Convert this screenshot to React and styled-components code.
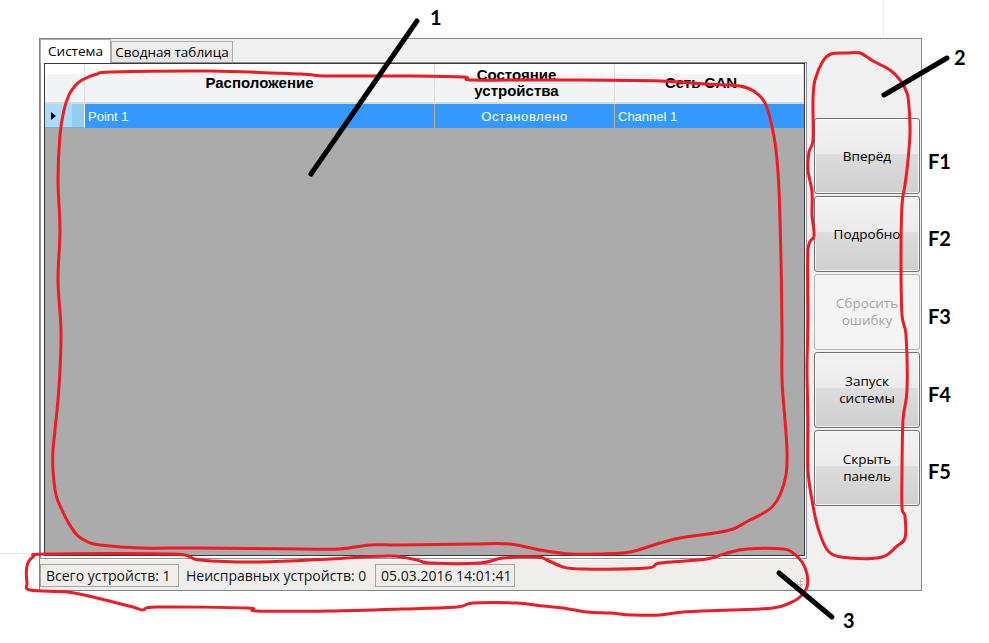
import React from "react";
import styled, { createGlobalStyle } from "styled-components";

const GlobalStyle = createGlobalStyle`
  html, body { margin: 0; padding: 0; background: #ffffff; }
  body { font-family: "Liberation Sans", Arial, sans-serif; }
`;

const UI_FONT = `"Liberation Sans", Arial, sans-serif`;
const SEGOE_FONT = `"Open Sans", "Liberation Sans", sans-serif`;
const NOTE_FONT = `Lato, "Open Sans", sans-serif`;

const Page = styled.div`
  position: relative;
  width: 989px;
  height: 643px;
  overflow: hidden;
  background: #ffffff;
`;

const Stage = styled.div`
  display: flex;
  align-items: flex-start;
  padding: 38px 0 0 39px;
`;

const Window = styled.div`
  box-sizing: border-box;
  width: 883px;
  height: 553px;
  border: 1px solid #7b8793;
  background: #f0f0f0;
  display: flex;
`;

const LeftColumn = styled.div`
  width: 767px;
  display: flex;
  flex-direction: column;
`;

const Tabs = styled.div`
  flex: 1;
  display: flex;
  flex-direction: column;
  min-height: 0;
`;

const TabStrip = styled.div`
  height: 23px;
  display: flex;
  align-items: flex-end;
`;

const Tab = styled.div`
  box-sizing: border-box;
  width: ${(p) => p.$w}px;
  height: ${(p) => (p.$active ? 24 : 21)}px;
  margin-bottom: ${(p) => (p.$active ? -1 : 0)}px;
  position: relative;
  z-index: ${(p) => (p.$active ? 1 : 0)};
  border: 1px solid #acacac;
  border-bottom: none;
  background: ${(p) => (p.$active ? "#ffffff" : "linear-gradient(#f2f2f2, #e3e3e3)")};
  font: 13.5px ${SEGOE_FONT};
  color: #000;
  display: flex;
  align-items: center;
  justify-content: center;
  padding-bottom: ${(p) => (p.$active ? 2 : 0)}px;
  white-space: nowrap;
`;

const TabPage = styled.div`
  flex: 1;
  box-sizing: border-box;
  border: 1px solid #8e9199;
  background: #ffffff;
  padding: 0 1px 2px 3px;
  display: flex;
  min-height: 0;
`;

const Grid = styled.div`
  flex: 1;
  border: 1px solid #3a3a3a;
  background: #ababab;
  display: flex;
  flex-direction: column;
`;

const COLS = "40px 350px 180px 1fr";

const HeaderRow = styled.div`
  display: grid;
  grid-template-columns: ${COLS};
  height: 40px;
  box-sizing: border-box;
  background: linear-gradient(#ffffff 0, #ffffff 27%, #f3f4f6 27%, #f1f2f4 100%);
  border-bottom: 2px solid #d9d9d9;
`;

const HeaderCell = styled.div`
  box-sizing: border-box;
  border-right: 1px solid #dcdcdc;
  display: flex;
  align-items: center;
  justify-content: center;
  text-align: center;
  padding-right: ${(p) => p.$shift || 0}px;
  font: bold 15px/16px ${UI_FONT};
  color: #000;
  overflow: hidden;
`;

const DataRow = styled.div`
  display: grid;
  grid-template-columns: ${COLS};
  height: 24px;
  background: #3399ff;
  color: #ffffff;
  font: 13px ${UI_FONT};
`;

const RowHeader = styled.div`
  box-sizing: border-box;
  border-right: 1px solid #ffffff;
  border-bottom: 1px solid #6fb3e0;
  background: linear-gradient(90deg, #aadaf7 0, #aadaf7 70%, #92cdf2 70%, #92cdf2 100%);
  display: flex;
  align-items: center;
  padding-left: 6px;
`;

const Arrow = styled.span`
  width: 0;
  height: 0;
  border-top: 4.5px solid transparent;
  border-bottom: 4.5px solid transparent;
  border-left: 5px solid #000;
`;

const DataCell = styled.div`
  box-sizing: border-box;
  border-right: 1px solid #c2ab8c;
  display: flex;
  align-items: center;
  justify-content: ${(p) => (p.$center ? "center" : "flex-start")};
  padding-left: ${(p) => (p.$center ? 0 : 3)}px;
  letter-spacing: ${(p) => (p.$center ? 0.6 : 0)}px;
  white-space: nowrap;
  overflow: hidden;
  &:last-child { border-right: none; }
`;

const StatusBar = styled.div`
  height: 31px;
  box-sizing: border-box;
  border-top: 1px solid #ffffff;
  background: #f0eeeb;
  display: flex;
  align-items: center;
  padding-top: 1px;
`;

const StatusItem = styled.div`
  box-sizing: border-box;
  width: ${(p) => p.$w}px;
  height: 23px;
  border: 1px solid ${(p) => (p.$boxed ? "#a3a3a3" : "transparent")};
  padding-left: ${(p) => (p.$boxed ? 5 : 6)}px;
  font: 14px/21px ${SEGOE_FONT};
  color: #10131a;
  white-space: nowrap;
  overflow: hidden;
`;

const Grip = styled.div`
  margin-left: auto;
  align-self: flex-end;
  width: 10px;
  height: 10px;
  margin-bottom: 3px;
  margin-right: 4px;
  background-image: radial-gradient(circle, #bdbdbd 1px, transparent 1.3px);
  background-size: 3px 3px;
  clip-path: polygon(100% 0, 100% 100%, 0 100%);
`;

const ButtonPanel = styled.div`
  flex: 1;
  display: flex;
  flex-direction: column;
  gap: 2px;
  padding: 79px 0 0 7px;
`;

const PanelButton = styled.button`
  box-sizing: border-box;
  width: 106px;
  height: 76px;
  border: 1px solid #707070;
  border-radius: 3px;
  background: linear-gradient(#f2f2f2 0, #ebebeb 47%, #dddddd 47%, #cfcfcf 100%);
  box-shadow: inset 0 0 0 1px rgba(255, 255, 255, 0.75);
  font: 13.5px/17px ${SEGOE_FONT};
  color: #000;
  padding: 0 2px;
  text-align: center;
  &:disabled {
    border-color: #b3b7ba;
    background: #f4f4f4;
    box-shadow: none;
    color: #a6a6a6;
  }
`;

const KeyColumn = styled.div`
  margin-left: 6px;
  padding-top: 84px;
  display: flex;
  flex-direction: column;
`;

const KeyLabel = styled.div`
  height: 77.6px;
  display: flex;
  align-items: center;
  font: bold 20px/1 ${NOTE_FONT};
  color: #000;
`;

const Overlay = styled.svg`
  position: absolute;
  left: 0;
  top: 0;
  pointer-events: none;
`;

const Callout = styled.span`
  position: absolute;
  left: ${(p) => p.$x}px;
  top: ${(p) => p.$y}px;
  font: bold 20px/20px ${NOTE_FONT};
  color: #000;
`;

function smooth(points, closed = true) {
  const n = points.length;
  const get = (i) => points[(i + n) % n];
  let d = `M${points[0][0]},${points[0][1]}`;
  const last = closed ? n : n - 1;
  for (let i = 0; i < last; i++) {
    const p0 = closed ? get(i - 1) : points[Math.max(i - 1, 0)];
    const p1 = get(i);
    const p2 = get(i + 1);
    const p3 = closed ? get(i + 2) : points[Math.min(i + 2, n - 1)];
    const c1 = [p1[0] + (p2[0] - p0[0]) / 6, p1[1] + (p2[1] - p0[1]) / 6];
    const c2 = [p2[0] - (p3[0] - p1[0]) / 6, p2[1] - (p3[1] - p1[1]) / 6];
    d += ` C${c1[0].toFixed(1)},${c1[1].toFixed(1)} ${c2[0].toFixed(1)},${c2[1].toFixed(1)} ${p2[0]},${p2[1]}`;
  }
  return closed ? d + " Z" : d;
}

const gridOutline = [
  [60, 135], [64, 110], [69, 95], [75, 86], [82, 80], [97, 74], [112, 72], [210, 71], [300, 74],
  [327, 76], [400, 76], [463, 77], [473, 80], [560, 80], [660, 81], [705, 84], [740, 86],
  [755, 92], [765, 103], [771, 122], [776, 150], [779, 190], [781, 260], [782, 330], [782, 380],
  [785, 420], [787, 450], [786, 475], [780, 495], [772, 507], [760, 515], [748, 521], [733, 529],
  [715, 533], [700, 535], [680, 538], [660, 543], [630, 552], [600, 554], [570, 554], [540, 550],
  [510, 544], [473, 544], [400, 545], [370, 545], [340, 549], [300, 549], [200, 548], [140, 548],
  [100, 545], [88, 542], [77, 535], [68, 522], [62, 510], [56, 495], [53, 470], [53, 450],
  [55, 430], [58, 400], [60, 370], [61, 330], [58, 280], [60, 230], [58, 180],
];

const panelOutline = [
  [813, 140], [813, 100], [815, 80], [823, 61], [831, 54], [847, 53], [860, 53], [873, 61],
  [890, 70], [900, 80], [907, 93], [909, 107], [910, 133], [908, 160], [905, 185], [902, 205],
  [901, 260], [902, 315], [906, 335], [907, 390], [903, 420], [902, 470], [902, 508], [905, 516],
  [905, 538], [897, 546], [882, 557], [850, 558], [829, 552], [818, 528], [812, 500], [808, 470],
  [808, 420], [807, 370], [808, 320], [808, 250], [814, 236], [812, 215], [812, 192], [808, 170],
  [809, 152],
];

const statusOutline = [
  [27, 566], [33, 557], [47, 554], [173, 554], [200, 560], [260, 562], [330, 559], [363, 557],
  [393, 556], [417, 560], [430, 563], [480, 563], [503, 558], [537, 557], [547, 560], [563, 567],
  [583, 569], [647, 568], [660, 563], [707, 559], [727, 553], [747, 549], [783, 549], [793, 553],
  [802, 562], [807, 574], [807, 587], [800, 597], [790, 603], [773, 608], [730, 610], [683, 612],
  [660, 615], [633, 615], [610, 613], [587, 612], [563, 608], [543, 606], [517, 603], [473, 603],
  [457, 607], [403, 609], [330, 611], [257, 611], [247, 608], [157, 607], [143, 610], [133, 607],
  [113, 602], [93, 597], [67, 592], [30, 590], [27, 583],
];

const buttons = [
  { label: ["Вперёд"] },
  { label: ["Подробно"] },
  { label: ["Сбросить", "ошибку"], disabled: true },
  { label: ["Запуск", "системы"] },
  { label: ["Скрыть", "панель"] },
];

export default function App() {
  return (
    <>
      <GlobalStyle />
      <Page>
        <Stage>
          <Window>
            <LeftColumn>
              <Tabs>
                <TabStrip>
                  <Tab $active $w={71}>Система</Tab>
                  <Tab $w={122}>Сводная таблица</Tab>
                </TabStrip>
                <TabPage>
                  <Grid>
                    <HeaderRow>
                      <HeaderCell />
                      <HeaderCell>Расположение</HeaderCell>
                      <HeaderCell $shift={16}>
                        Состояние
                        <br />
                        устройства
                      </HeaderCell>
                      <HeaderCell $shift={16}>Сеть CAN</HeaderCell>
                    </HeaderRow>
                    <DataRow>
                      <RowHeader>
                        <Arrow />
                      </RowHeader>
                      <DataCell>Point 1</DataCell>
                      <DataCell $center>Остановлено</DataCell>
                      <DataCell>Channel 1</DataCell>
                    </DataRow>
                  </Grid>
                </TabPage>
              </Tabs>
              <StatusBar>
                <StatusItem $boxed $w={139}>Всего устройств: 1</StatusItem>
                <StatusItem $w={196}>Неисправных устройств: 0</StatusItem>
                <StatusItem $boxed $w={140}>05.03.2016 14:01:41</StatusItem>
                <Grip />
              </StatusBar>
            </LeftColumn>
            <ButtonPanel>
              {buttons.map((b, i) => (
                <PanelButton key={i} disabled={b.disabled}>
                  {b.label.map((l, j) => (
                    <React.Fragment key={j}>
                      {j > 0 && <br />}
                      {l}
                    </React.Fragment>
                  ))}
                </PanelButton>
              ))}
            </ButtonPanel>
          </Window>
          <KeyColumn>
            {["F1", "F2", "F3", "F4", "F5"].map((k) => (
              <KeyLabel key={k}>{k}</KeyLabel>
            ))}
          </KeyColumn>
        </Stage>

        <Overlay width="989" height="643" viewBox="0 0 989 643">
          <line x1="883.5" y1="0" x2="883.5" y2="37" stroke="#e6ecf2" strokeWidth="1" />
          <line x1="0" y1="553.5" x2="38" y2="553.5" stroke="#dde8f1" strokeWidth="1" />
          <g fill="none" stroke="#ed1c24" strokeWidth="3" strokeLinejoin="round" strokeLinecap="round">
            <path d={smooth(gridOutline)} />
            <path d={smooth(panelOutline)} />
            <path d={smooth(statusOutline)} />
          </g>
          <g stroke="#000" strokeWidth="5" strokeLinecap="round">
            <line x1="417" y1="21" x2="311" y2="174" />
            <line x1="947" y1="58" x2="884" y2="95" />
            <line x1="779" y1="573" x2="832" y2="617" />
          </g>
        </Overlay>
        <Callout $x={430} $y={7}>1</Callout>
        <Callout $x={954} $y={47}>2</Callout>
        <Callout $x={843} $y={610}>3</Callout>
      </Page>
    </>
  );
}
